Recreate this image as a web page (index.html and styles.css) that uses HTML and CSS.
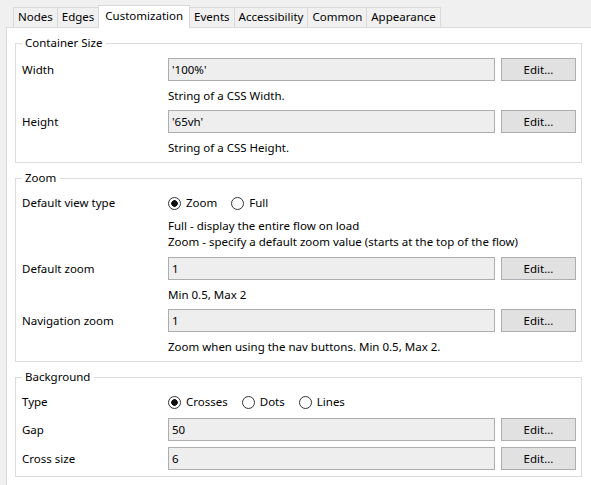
FILE: index.html
```html
<!DOCTYPE html>
<html>
<head>
<meta charset="utf-8">
<title>Customization</title>
<link rel="stylesheet" href="styles.css">
</head>
<body>
<div class="window">
  <div class="tabs">
    <div class="tab">Nodes</div>
    <div class="tab">Edges</div>
    <div class="tab tab-active">Customization</div>
    <div class="tab">Events</div>
    <div class="tab">Accessibility</div>
    <div class="tab">Common</div>
    <div class="tab">Appearance</div>
  </div>
  <div class="page">
    <fieldset class="group">
      <legend class="group-title">Container Size</legend>
      <div class="form">
        <span class="label">Width</span>
        <input class="field" type="text" value="'100%'" readonly>
        <button class="btn" type="button">Edit...</button>
        <div class="help">String of a CSS Width.</div>
        <span class="label">Height</span>
        <input class="field" type="text" value="'65vh'" readonly>
        <button class="btn" type="button">Edit...</button>
        <div class="help">String of a CSS Height.</div>
      </div>
    </fieldset>

    <fieldset class="group">
      <legend class="group-title">Zoom</legend>
      <div class="form">
        <span class="label">Default view type</span>
        <div class="radios">
          <label class="option"><input class="radio" type="radio" name="view" checked>Zoom</label>
          <label class="option"><input class="radio" type="radio" name="view">Full</label>
        </div>
        <div class="help help-lines">Full - display the entire flow on load<br>Zoom - specify a default zoom value (starts at the top of the flow)</div>
        <span class="label">Default zoom</span>
        <input class="field" type="text" value="1" readonly>
        <button class="btn" type="button">Edit...</button>
        <div class="help">Min 0.5, Max 2</div>
        <span class="label">Navigation zoom</span>
        <input class="field" type="text" value="1" readonly>
        <button class="btn" type="button">Edit...</button>
        <div class="help">Zoom when using the nav buttons. Min 0.5, Max 2.</div>
      </div>
    </fieldset>

    <fieldset class="group group-last">
      <legend class="group-title">Background</legend>
      <div class="form form-compact">
        <span class="label">Type</span>
        <div class="radios">
          <label class="option"><input class="radio" type="radio" name="bg" checked>Crosses</label>
          <label class="option"><input class="radio" type="radio" name="bg">Dots</label>
          <label class="option"><input class="radio" type="radio" name="bg">Lines</label>
        </div>
        <span class="label">Gap</span>
        <input class="field" type="text" value="50" readonly>
        <button class="btn" type="button">Edit...</button>
        <span class="label">Cross size</span>
        <input class="field" type="text" value="6" readonly>
        <button class="btn" type="button">Edit...</button>
      </div>
    </fieldset>
  </div>
</div>
</body>
</html>
```

FILE: styles.css
```css
html, body {
  margin: 0;
  height: 100%;
  overflow: hidden;
}

body {
  background: #f0f0f0;
  font-family: "Noto Sans", "Open Sans", sans-serif;
  font-size: 11.5px;
  color: #000;
}

.window {
  padding-left: 6px;
}

.tabs {
  display: flex;
  align-items: flex-end;
  height: 27px;
  padding-left: 7px;
}

.tab {
  height: 20px;
  box-sizing: border-box;
  padding: 0 4px;
  border: 1px solid #d9d9d9;
  border-bottom: none;
  margin-right: -1px;
  background: #f0f0f0;
  line-height: 18px;
  white-space: nowrap;
}

.tab-active {
  height: 23px;
  padding: 0 6px;
  margin-bottom: -1px;
  background: #fff;
  position: relative;
  z-index: 1;
  line-height: 20px;
}

.page {
  background: #fff;
  border: 1px solid #d9d9d9;
  width: 640px;
  height: 520px;
  padding: 0 0 0 8px;
  box-sizing: border-box;
}

.group {
  margin: 7px 0 0;
  padding: 7px 5px 0 6px;
  border: 1px solid #dcdcdc;
  width: 567px;
  box-sizing: border-box;
  min-width: 0;
}

.group-last {
  padding-bottom: 6px;
}

.group-title {
  padding: 0 4px 0 3px;
  line-height: 16px;
}

.form {
  display: grid;
  grid-template-columns: 140px 327px 75px;
  column-gap: 6px;
  align-items: center;
}

.form-compact {
  row-gap: 6px;
}

.label {
  grid-column: 1;
  line-height: 16px;
  white-space: nowrap;
}

.field {
  grid-column: 2;
  width: 100%;
  height: 23px;
  box-sizing: border-box;
  margin: 0;
  padding: 0 3px;
  border: 1px solid #adadad;
  background: #eeeeee;
  font: inherit;
  color: #000;
  outline: none;
}

.btn {
  grid-column: 3;
  height: 23px;
  box-sizing: border-box;
  margin: 0;
  padding: 0;
  border: 1px solid #adadad;
  background: #e1e1e1;
  font: inherit;
  color: #000;
}

.help {
  grid-column: 2 / 4;
  padding: 7px 0 6px;
  line-height: 16px;
  white-space: nowrap;
}

.help-lines {
  padding: 5px 0 7px;
}

.radios {
  grid-column: 2 / 4;
  height: 20px;
  display: flex;
  align-items: center;
}

.option {
  display: flex;
  align-items: center;
  margin-right: 14px;
  line-height: 16px;
}

.radio {
  appearance: none;
  -webkit-appearance: none;
  width: 13px;
  height: 13px;
  margin: 0 5px 0 0;
  border: 1px solid #333;
  border-radius: 50%;
  box-sizing: border-box;
  background: #fff;
}

.radio:checked {
  background: radial-gradient(circle, #111 0 3px, transparent 3.6px) #fff;
}
```
